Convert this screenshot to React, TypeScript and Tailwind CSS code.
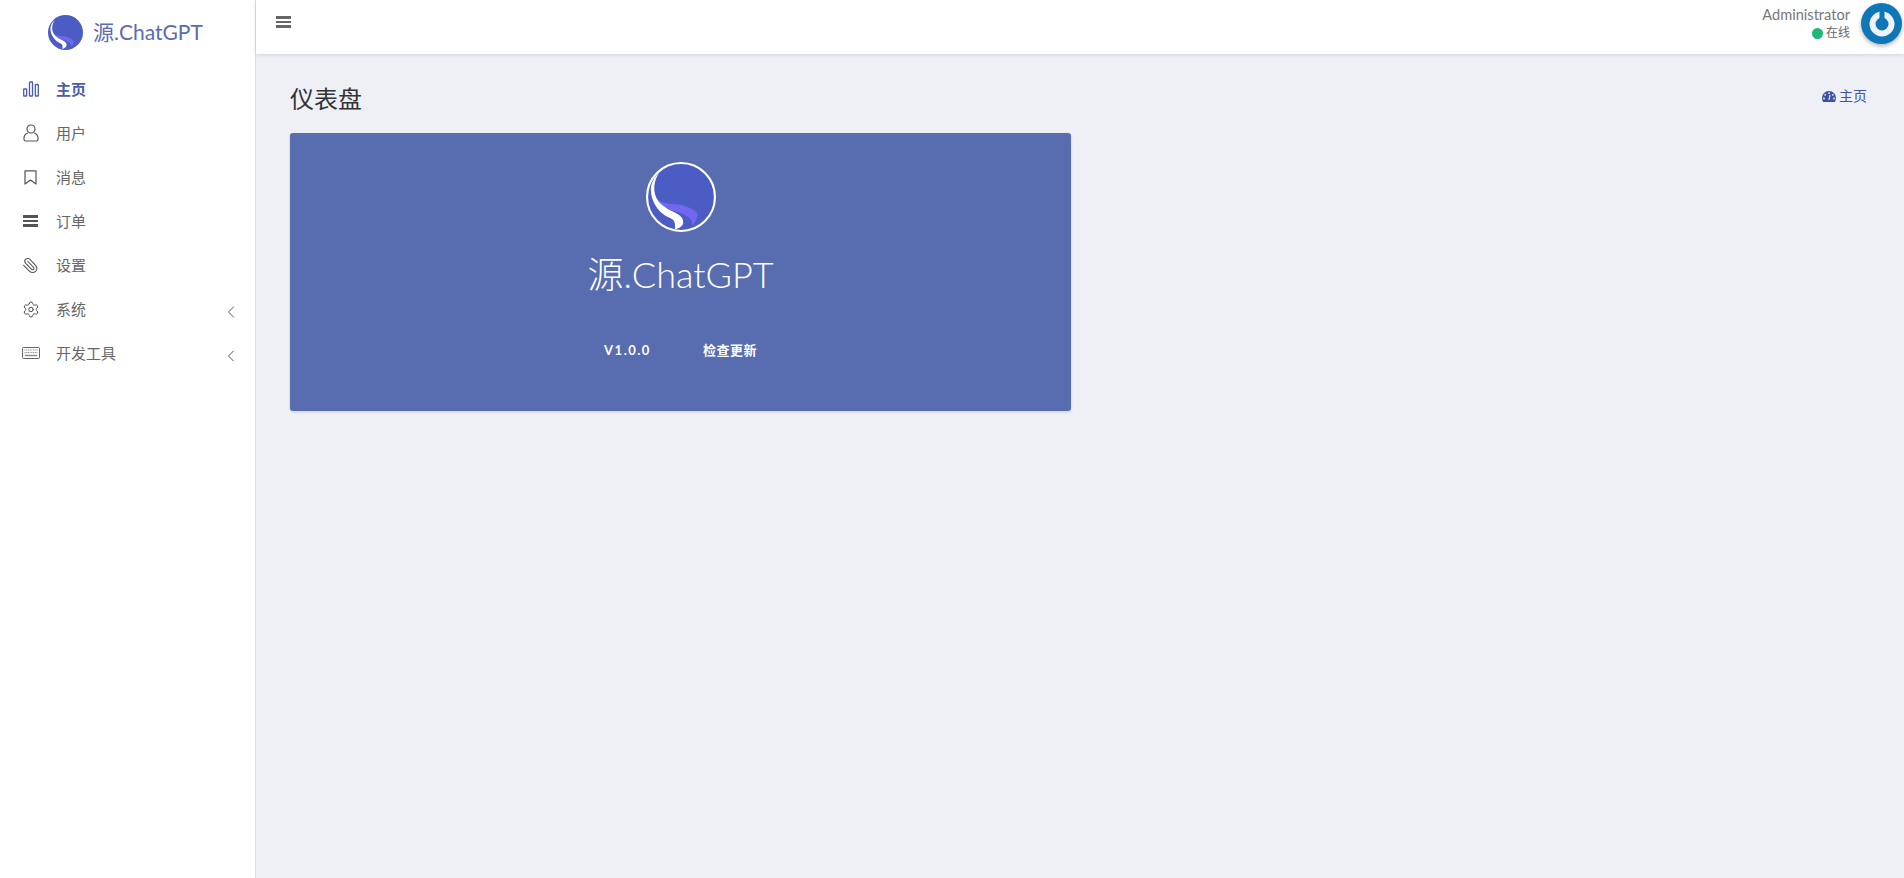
import { ChevronLeft, Paperclip, Settings } from 'lucide-react';
import type { ReactNode } from 'react';

const latin = "font-['Lato','Noto_Sans_CJK_SC',sans-serif]";

function Logo({ size, ring }: { size: number; ring?: boolean }) {
  const clipId = ring ? 'logo-clip-ring' : 'logo-clip';
  return (
    <svg width={size} height={size} viewBox="0 0 100 100" className="shrink-0">
      <defs>
        <clipPath id={clipId}>
          <circle cx="50" cy="50" r={ring ? 47 : 50} />
        </clipPath>
      </defs>
      <g clipPath={`url(#${clipId})`}>
        <rect width="100" height="100" fill="#4b5cc4" />
        <path d="M15 50 C18 56 23 58 29 59 C40 61 50 60 58 64 C68 68 76 72 73 78 C72 84 69 88 66 91 C66 85 64 81 61 79 C56 75 50 73 44 71 C36 69 30 68 25 64 C20 60 16 56 15 50Z" fill="#7367f0" />
        <path d="M19 15 C11 22 6 32 7 42 C8 54 14 66 24 74 C30 79 36 80 39 83 C42 87 42 92 41 97 C47 95 52 92 53 88 C54 82 51 78 46 75 C40 71 33 69 28 65 C20 60 15 54 13 46 C10 36 13 24 19 15Z" fill="#ffffff" />
      </g>
      {ring && <circle cx="50" cy="50" r="48.5" fill="none" stroke="#ffffff" strokeWidth="3" />}
    </svg>
  );
}

function BarsIcon() {
  return (
    <svg width="16" height="16" viewBox="0 0 16 16" fill="none" stroke="currentColor" strokeWidth="1.3">
      <rect x="0.7" y="8" width="3" height="7" rx="0.6" />
      <rect x="6.5" y="1" width="3" height="14" rx="0.6" />
      <rect x="12.3" y="3.5" width="3" height="11.5" rx="0.6" />
    </svg>
  );
}

function UserIcon() {
  return (
    <svg width="16" height="18" viewBox="0 0 16 18" fill="none" stroke="currentColor" strokeWidth="1.2">
      <circle cx="8" cy="5" r="4" />
      <path d="M5 9C2.5 9.8 1 11.6 1 14v1.2c0 1 .8 1.8 1.8 1.8h10.4c1 0 1.8-.8 1.8-1.8V14c0-2.4-1.5-4.2-4-5" />
    </svg>
  );
}

function BookmarkIcon() {
  return (
    <svg width="13" height="15" viewBox="0 0 13 15" fill="none" stroke="currentColor" strokeWidth="1.2">
      <path d="M1 .8h11v13.2l-5.5-4-5.5 4Z" strokeLinejoin="round" />
    </svg>
  );
}

function ThickMenuIcon({ color = 'bg-[#555]' }: { color?: string }) {
  return (
    <div className="flex w-[15px] flex-col gap-[2px]">
      <div className={`h-[2.5px] ${color}`} />
      <div className={`h-[2.5px] ${color}`} />
      <div className={`h-[2.5px] ${color}`} />
    </div>
  );
}

function KeyboardIcon() {
  return (
    <svg width="18" height="12" viewBox="0 0 18 12" fill="none">
      <rect x="0.5" y="0.5" width="17" height="11" rx="1" stroke="#666" />
      <path d="M2.5 3h13M2.5 5.5h13" stroke="#888" strokeWidth="1.2" strokeDasharray="1 0.7" />
      <path d="M3 8.5h12" stroke="#888" strokeWidth="1.4" />
    </svg>
  );
}

function GaugeIcon() {
  return (
    <svg width="14" height="11" viewBox="0 0 14 11">
      <path d="M7 0a7 7 0 0 0-7 7c0 1.4.4 2.8 1.1 4h11.8c.7-1.2 1.1-2.6 1.1-4a7 7 0 0 0-7-7Z" fill="#3f51a3" />
      <circle cx="7" cy="2.2" r="0.9" fill="#eef0f6" />
      <circle cx="3.2" cy="3.8" r="0.9" fill="#eef0f6" />
      <circle cx="10.8" cy="3.8" r="0.9" fill="#eef0f6" />
      <circle cx="2" cy="7.5" r="0.9" fill="#eef0f6" />
      <circle cx="12" cy="7.5" r="0.9" fill="#eef0f6" />
      <path d="M7 9 8 4" stroke="#eef0f6" strokeWidth="1.2" />
    </svg>
  );
}

type NavItem = { label: string; icon: ReactNode; active?: boolean };

const navItems: NavItem[] = [
  { label: '主页', icon: <BarsIcon />, active: true },
  { label: '用户', icon: <UserIcon /> },
  { label: '消息', icon: <BookmarkIcon /> },
  { label: '订单', icon: <ThickMenuIcon /> },
  { label: '设置', icon: <Paperclip size={17} strokeWidth={1.5} className="-scale-x-100" /> },
  { label: '系统', icon: <Settings size={21} strokeWidth={1.3} className="text-[#444]" /> },
  { label: '开发工具', icon: <KeyboardIcon /> },
];

export default function App() {
  return (
    <div className={`flex h-[878px] overflow-hidden bg-[#eff0f6] ${latin}`}>
      <aside className="w-[256px] shrink-0 border-r border-[#dcdfe8] bg-white">
        <div className="flex h-[54px] items-center pt-[10px] pl-[48px]">
          <Logo size={35} />
          <span className="ml-[10px] text-[21px] text-[#5a6cae]">源.ChatGPT</span>
        </div>
        <nav className="mt-[13px]">
          {navItems.map((item) => (
            <div key={item.label} className="flex h-[44px] items-center">
              <div className={`flex w-[56px] justify-center pl-[5px] ${item.active ? 'text-[#4b5da8]' : 'text-[#555]'}`}>
                <div className="flex w-[18px] justify-center">{item.icon}</div>
              </div>
              <span className={`text-[15px] ${item.active ? 'font-bold text-[#4b5da8]' : 'text-[#666]'}`}>{item.label}</span>
              {(item.label === '系统' || item.label === '开发工具') && (
                <ChevronLeft size={20} strokeWidth={1.2} className="mt-[6px] mr-[14px] ml-auto text-[#555]" />
              )}
            </div>
          ))}
        </nav>
      </aside>
      <div className="flex min-w-0 flex-1 flex-col">
        <header className="flex h-[54px] items-start justify-between bg-white shadow-[0_1px_4px_rgba(0,0,0,0.12)]">
          <div className="mt-[16px] ml-[20px]">
            <ThickMenuIcon color="bg-[#666]" />
          </div>
          <div className="flex items-start">
            <div className="mt-[6px] mr-[11px] flex flex-col items-end">
              <span className="text-[14.6px] leading-[17px] text-[#777]">Administrator</span>
              <div className="mt-[2px] flex items-center gap-[3px]">
                <div className="h-[11px] w-[11px] rounded-full bg-[#1cb978]" />
                <span className="text-[12px] leading-[16px] text-[#666]">在线</span>
              </div>
            </div>
            <div className="mt-[3px] mr-[2px] flex h-[41px] w-[41px] items-center justify-center rounded-full bg-[#0f76b8] shadow-[0_2px_4px_rgba(0,0,0,0.3)]">
              <svg width="30" height="30" viewBox="0 0 30 30" fill="none">
                <circle cx="15" cy="15" r="9.5" stroke="#eef3f8" strokeWidth="6" />
                <path d="M15 3v13" stroke="#0f76b8" strokeWidth="5" strokeLinecap="round" />
              </svg>
            </div>
          </div>
        </header>
        <main className="px-[34px]">
          <div className="flex h-[79px] items-start justify-between">
            <h1 className="mt-[30px] text-[24px] leading-[30px] font-normal text-[#333]">仪表盘</h1>
            <div className="mt-[33px] flex items-center gap-[3px] pr-[3px] text-[14px] leading-[18px] text-[#3f51a3]">
              <GaugeIcon />
              <span>主页</span>
            </div>
          </div>
          <section className="flex h-[278px] w-[781px] flex-col items-center rounded-[3px] bg-[#586cb0] shadow-[0_1px_3px_rgba(0,0,0,0.15)]">
            <div className="mt-[29px]">
              <Logo size={70} ring />
            </div>
            <div className="mt-[19px] text-[36px] leading-[46px] font-light text-white">源.ChatGPT</div>
            <div className="mt-[45px] flex items-center gap-[52px] text-[13px] leading-[16px] font-bold tracking-[0.5px] text-white">
              <span className="tracking-[1.5px]">V1.0.0</span>
              <span>检查更新</span>
            </div>
          </section>
        </main>
      </div>
    </div>
  );
}
